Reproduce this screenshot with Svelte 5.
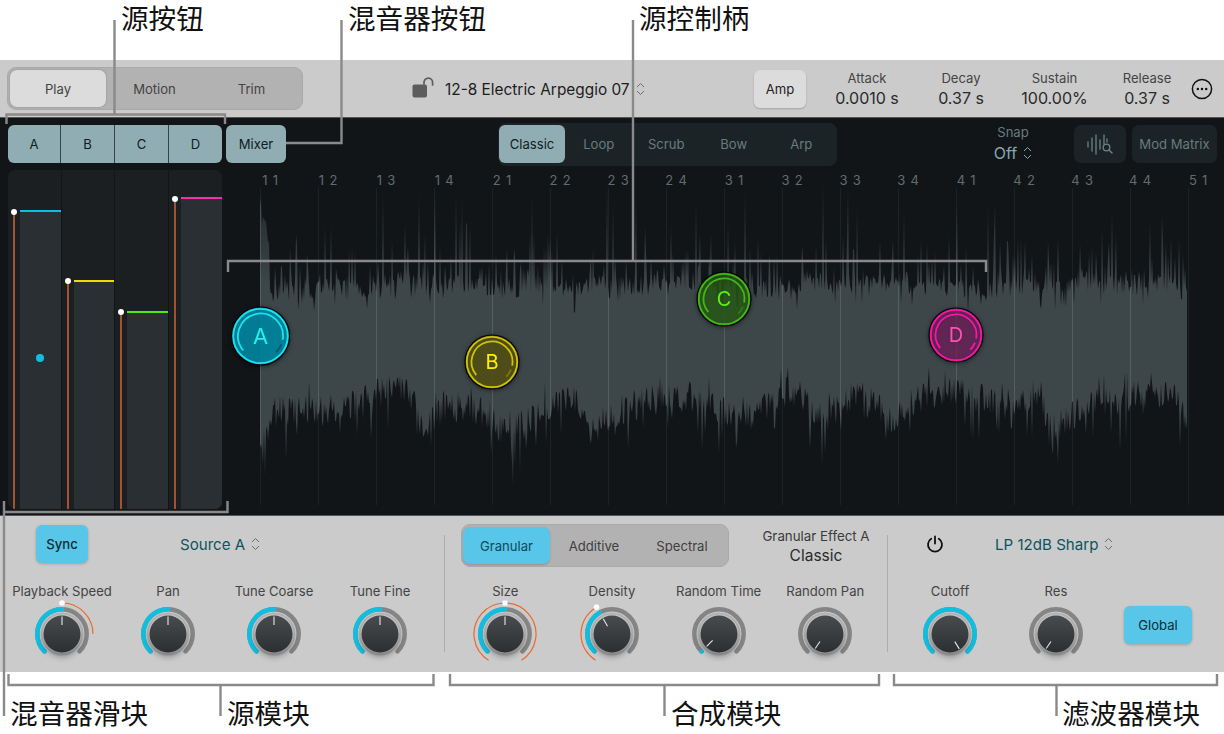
<script>
  const pt = (cx, cy, r, a) => {
    const t = (a * Math.PI) / 180;
    return [cx + r * Math.sin(t), cy - r * Math.cos(t)];
  };
  const arc = (cx, cy, r, a1, a2) => {
    const [x1, y1] = pt(cx, cy, r, a1);
    const [x2, y2] = pt(cx, cy, r, a2);
    return `M${x1.toFixed(2)} ${y1.toFixed(2)}A${r} ${r} 0 ${a2 - a1 > 180 ? 1 : 0} 1 ${x2.toFixed(2)} ${y2.toFixed(2)}`;
  };
  const C = 35;
  const sourceKnobs = [
    { id: 'k1', label: 'Playback Speed', value: 0, fill: [-135, 0], orange: [[0, 90]], dot: 0 },
    { id: 'k2', label: 'Pan', value: 0, fill: [-135, 0] },
    { id: 'k3', label: 'Tune Coarse', value: 0, fill: [-135, 0] },
    { id: 'k4', label: 'Tune Fine', value: 0, fill: [-135, 0] }
  ];
  const synthKnobs = [
    { id: 'k5', label: 'Size', value: 0, fill: [-135, 0], orange: [[-148, 148]], dot: 0, square: true },
    { id: 'k6', label: 'Density', value: -30, fill: [-135, -30], orange: [[-148, -30]], dot: -30 },
    { id: 'k7', label: 'Random Time', value: -135, tip: true },
    { id: 'k8', label: 'Random Pan', value: -146 }
  ];
  const filterKnobs = [
    { id: 'k9', label: 'Cutoff', value: 148, fill: [-135, 135] },
    { id: 'k10', label: 'Res', value: -146 }
  ];

  let seed = 20240611;
  const rnd = () => {
    seed = (seed * 1664525 + 1013904223) % 4294967296;
    return seed / 4294967296;
  };
  const lowerKeys = [[260,440],[275,412],[300,408],[340,412],[373,395],[407,385],[423,428],[445,405],[473,410],[490,415],[507,435],[540,412],[573,392],[590,435],[610,415],[640,402],[673,397],[707,397],[724,412],[757,412],[790,390],[824,420],[857,390],[890,420],[924,395],[957,392],[1007,405],[1040,392],[1050,436],[1065,420],[1090,405],[1157,392],[1175,400],[1187,425]];
  const lower = (x) => {
    for (let i = 1; i < lowerKeys.length; i++) {
      if (x <= lowerKeys[i][0]) {
        const [a, b] = lowerKeys[i - 1];
        const [c, d] = lowerKeys[i];
        return b + ((d - b) * (x - a)) / (c - a);
      }
    }
    return 425;
  };
  const upperPts = [];
  const lowerPts = [];
  for (let x = 260; x <= 1187; x += 1) {
    const r = rnd();
    const base = 281 + 4 * Math.sin(x / 37) + 3 * Math.sin(x / 11);
    let y;
    if (r < 0.56) y = base + rnd() * 15 + (rnd() > 0.86 ? 14 : 0);
    else if (r > 0.972) y = base - 45 - rnd() * 55;
    else y = base - Math.pow(rnd(), 2.6) * 56;
    if (x < 268) y = 190 + (x - 260) * 3 + rnd() * 30;
    upperPts.push(`${x},${y.toFixed(1)}`);
    const q = rnd();
    let l = lower(x) + (rnd() - 0.5) * 32;
    if (q > 0.93) l += 18 + rnd() * 24;
    else if (q < 0.06) l -= 14;
    if (x < 264) l = 440 + rnd() * 30;
    lowerPts.unshift(`${x},${l.toFixed(1)}`);
  }
  const wave = [...upperPts, ...lowerPts].join(' ');

  const bars = ['1 1','1 2','1 3','1 4','2 1','2 2','2 3','2 4','3 1','3 2','3 3','3 4','4 1','4 2','4 3','4 4','5 1'];
  const strips = [
    { fader: 297, h: 299, color: '#10bfe0' },
    { fader: 228, h: 229, color: '#e8e000' },
    { fader: 197, h: 198, color: '#55e810' },
    { fader: 310, h: 312, color: '#ff2ea8' }
  ];
  const handles = [
    { n: 'A', x: 260.5, y: 336, r: 29, fill: 'rgba(0,132,158,.93)', ring: '#19e3ee', text: '#22f0f5', dim: '#075a68', size: 22 },
    { n: 'B', x: 492, y: 362, r: 27, fill: 'rgba(88,84,22,.82)', ring: '#cfc400', text: '#fff000', dim: '#7d7700', size: 20 },
    { n: 'C', x: 724, y: 299, r: 27, fill: 'rgba(42,100,22,.72)', ring: '#42b814', text: '#5cf01c', dim: '#2f7d10', size: 20 },
    { n: 'D', x: 956, y: 335, r: 27, fill: 'rgba(140,28,110,.55)', ring: '#ff12a6', text: '#ff50b4', dim: '#ff12a6', size: 20 }
  ];
</script>

{#snippet chevrons()}
  <svg class="chev" viewBox="0 0 9 14" aria-hidden="true">
    <path d="M1 5 4.5 1.5 8 5M1 9l3.5 3.5L8 9" />
  </svg>
{/snippet}

{#snippet knob(k)}
  <div class="knob">
    <span class="klabel">{k.label}</span>
    <svg class="kdial" viewBox="0 0 70 70" aria-hidden="true">
      <defs>
        <linearGradient id={k.id} x1="0" y1="0" x2="0" y2="1">
          <stop offset="0" stop-color="#484c4f" />
          <stop offset="1" stop-color="#2b2f32" />
        </linearGradient>
      </defs>
      <path class="track" d={arc(C, C, 24.7, -135, 135)} />
      {#if k.fill}<path class="fillarc" d={arc(C, C, 24.7, k.fill[0], k.fill[1])} />{/if}
      {#if k.tip}<circle cx={pt(C, C, 24.7, -135)[0]} cy={pt(C, C, 24.7, -135)[1]} r="2.2" fill="#10bfe0" />{/if}
      <circle cx={C} cy={C} r="20.5" class="halo" />
      <circle cx={C} cy={C} r="18.5" class="cap" fill={`url(#${k.id})`} />
      <line
        class="pointer"
        x1={pt(C, C, 9, k.value)[0]}
        y1={pt(C, C, 9, k.value)[1]}
        x2={pt(C, C, 17.5, k.value)[0]}
        y2={pt(C, C, 17.5, k.value)[1]}
      />
      {#each k.orange ?? [] as o}
        <path class="mod" d={arc(C, C, 31, o[0], o[1])} />
      {/each}
      {#if k.dot !== undefined}
        {#if k.square}
          <rect x={pt(C, C, 31, k.dot)[0] - 2.5} y={pt(C, C, 31, k.dot)[1] - 2.5} width="5" height="5" rx="1" fill="#fff" />
        {:else}
          <circle cx={pt(C, C, 31, k.dot)[0]} cy={pt(C, C, 31, k.dot)[1]} r="2.8" fill="#fff" />
        {/if}
      {/if}
    </svg>
  </div>
{/snippet}

<div class="page">
  <div class="caprow top">
    <span class="cap-a">源按钮</span>
    <span class="cap-b">混音器按钮</span>
    <span class="cap-c">源控制柄</span>
  </div>

  <header class="head">
    <div class="seg mode">
      <button class="on">Play</button>
      <button>Motion</button>
      <button>Trim</button>
    </div>
    <div class="patch">
      <svg class="lock" viewBox="0 0 22 21" aria-hidden="true">
        <rect x="0.5" y="7.5" width="14.5" height="13" rx="2" fill="#5c5c5c" />
        <path d="M12 7V5.5a4.3 4.3 0 0 1 8.6 0V8" fill="none" stroke="#5c5c5c" stroke-width="1.7" stroke-linecap="round" />
      </svg>
      <span class="pname">12-8 Electric Arpeggio 07</span>
      {@render chevrons()}
    </div>
    <button class="amp">Amp</button>
    <div class="env">
      <div><span>Attack</span><b>0.0010 s</b></div>
      <div><span>Decay</span><b>0.37 s</b></div>
      <div><span>Sustain</span><b>100.00%</b></div>
      <div><span>Release</span><b>0.37 s</b></div>
    </div>
    <svg class="more" viewBox="0 0 22 22" aria-hidden="true">
      <circle cx="11" cy="11" r="9.6" fill="none" stroke="#111" stroke-width="1.5" />
      <circle cx="6.8" cy="11" r="1.25" fill="#111" />
      <circle cx="11" cy="11" r="1.25" fill="#111" />
      <circle cx="15.2" cy="11" r="1.25" fill="#111" />
    </svg>
  </header>

  <section class="editor">
    <div class="tools">
      <div class="sources">
        <button>A</button><button>B</button><button>C</button><button>D</button>
      </div>
      <button class="mixer">Mixer</button>
      <div class="modes">
        <button class="on">Classic</button>
        <button>Loop</button>
        <button>Scrub</button>
        <button>Bow</button>
        <button>Arp</button>
      </div>
      <div class="snap">
        <span>Snap</span>
        <div class="snapv"><b>Off</b>{@render chevrons()}</div>
      </div>
      <button class="dark icon" aria-label="Waveform zoom">
        <svg viewBox="0 0 26 22" aria-hidden="true">
          <path d="M1 9v5M5 5v13M9 2v19M13 7v9M17 2v9M20 6v3" fill="none" stroke="#6d8286" stroke-width="1.3" stroke-linecap="round" />
          <circle cx="19.5" cy="14.5" r="3.3" fill="none" stroke="#6d8286" stroke-width="1.3" />
          <path d="m22 17 3 3" stroke="#6d8286" stroke-width="1.4" stroke-linecap="round" />
        </svg>
      </button>
      <button class="dark matrix">Mod Matrix</button>
    </div>

    <div class="work">
      <div class="mixerpane">
        {#each strips as s}
          <div class="strip">
            <div class="fader" style={`height:${s.fader}px`}></div>
            <div class="level" style={`height:${s.h}px;border-top-color:${s.color}`}></div>
          </div>
        {/each}
        <span class="srcdot"></span>
      </div>
      <svg class="wavebox" viewBox="226 170 998 346" aria-hidden="true">
        <defs>
          <linearGradient id="wv" gradientUnits="userSpaceOnUse" x1="0" y1="190" x2="0" y2="480">
            <stop offset="0" stop-color="#22282b" />
            <stop offset="0.25" stop-color="#363e41" />
            <stop offset="0.33" stop-color="#3d4649" />
            <stop offset="0.83" stop-color="#3d4649" />
            <stop offset="1" stop-color="#262d30" />
          </linearGradient>
          <clipPath id="wc"><polygon points={wave} /></clipPath>
        </defs>
        <polygon points={wave} fill="url(#wv)" />
        {#each bars as b, i}
          <line class="grid" x1={260.5 + i * 58} y1="188" x2={260.5 + i * 58} y2="505" />
          <text class="barno" x={270.5 + i * 58} y="185">{b}</text>
        {/each}
        <g clip-path="url(#wc)">
          {#each bars as b, i}
            <line class="gridin" x1={260.5 + i * 58} y1="188" x2={260.5 + i * 58} y2="505" />
          {/each}
        </g>
        {#each handles as h}
          <g class="handle">
            <circle cx={h.x} cy={h.y} r={h.r} fill={h.fill} stroke="#050505" stroke-width="1.2" />
            <circle cx={h.x} cy={h.y} r={h.r - 1.8} fill="none" stroke={h.ring} stroke-width="1.8" />
            <path d={arc(h.x, h.y, h.r - 6.5, -130, 100)} fill="none" stroke={h.ring} stroke-width="1.8" />
            <path d={arc(h.x, h.y, h.r - 6.5, 112, 136)} fill="none" stroke={h.dim} stroke-width="1.8" />
            <text x={h.x} y={h.y + h.size * 0.36} fill={h.text} font-size={h.size} text-anchor="middle">{h.n}</text>
          </g>
        {/each}
      </svg>
    </div>
  </section>

  <section class="panel">
    <div class="module m1">
      <div class="mtop">
        <button class="blue sync">Sync</button>
        <div class="pick srcpick"><span>Source A</span>{@render chevrons()}</div>
      </div>
      <div class="knobs">
        {#each sourceKnobs as k}{@render knob(k)}{/each}
      </div>
    </div>
    <div class="rule"></div>
    <div class="module m2">
      <div class="mtop">
        <div class="seg synth">
          <button class="on">Granular</button>
          <button>Additive</button>
          <button>Spectral</button>
        </div>
        <div class="effect"><span>Granular Effect A</span><b>Classic</b></div>
      </div>
      <div class="knobs">
        {#each synthKnobs as k}{@render knob(k)}{/each}
      </div>
    </div>
    <div class="rule"></div>
    <div class="module m3">
      <div class="mtop">
        <svg class="power" viewBox="0 0 18 18" aria-hidden="true">
          <path d="M5.2 3.8a7 7 0 1 0 7.6 0M9 1.5v7" fill="none" stroke="#111" stroke-width="1.8" stroke-linecap="round" />
        </svg>
        <div class="pick"><span>LP 12dB Sharp</span>{@render chevrons()}</div>
      </div>
      <div class="knobs">
        {#each filterKnobs as k}{@render knob(k)}{/each}
        <button class="blue global">Global</button>
      </div>
    </div>
  </section>

  <div class="caprow bottom">
    <span class="cap-d">混音器滑块</span>
    <span class="cap-e">源模块</span>
    <span class="cap-f">合成模块</span>
    <span class="cap-g">滤波器模块</span>
  </div>

  <svg class="callouts" viewBox="0 0 1224 734" aria-hidden="true">
    <path d="M114.5 20V114.5M6.5 124V114.5H225V124" />
    <path d="M341.5 20V143H286" />
    <path d="M633 20V261M228 272V261H986V272" />
    <path d="M4 501V716M4 512H227.5V501" />
    <path d="M8.5 674V685H433.5V674M220.5 685V716" />
    <path d="M450 674V685H879V674M664.5 685V716" />
    <path d="M894 674V685H1217V674M1056.5 685V716" />
  </svg>
</div>

<style>
  :global(body) {
    margin: 0;
    background: #fff;
  }
  .page {
    position: relative;
    width: 1224px;
    height: 734px;
    overflow: hidden;
    font-family: Inter, "Liberation Sans", "Noto Sans CJK SC", sans-serif;
    font-size: 13.1px;
    color: #3b3b3b;
  }
  button {
    font: inherit;
    border: 0;
    padding: 0;
    background: none;
    color: inherit;
  }

  .caprow {
    position: relative;
    background: #fff;
    font-family: "Liberation Sans", "Noto Sans CJK SC", sans-serif;
    font-size: 27.6px;
    line-height: 36px;
    color: #111;
  }
  .caprow.top { height: 60px; }
  .caprow.bottom { height: 62px; }
  .caprow span { position: absolute; white-space: nowrap; }
  .top span { top: 2px; }
  .bottom span { top: 25px; }
  .cap-a { left: 121px; }
  .cap-b { left: 348px; }
  .cap-c { left: 639px; }
  .cap-d { left: 10px; }
  .cap-e { left: 227px; }
  .cap-f { left: 671px; }
  .cap-g { left: 1062px; }

  .callouts {
    position: absolute;
    inset: 0;
    width: 1224px;
    height: 734px;
    pointer-events: none;
  }
  .callouts path {
    fill: none;
    stroke: #8a8a8a;
    stroke-width: 2.4;
  }

  .head {
    height: 57px;
    background: #cbcbcb;
    border-bottom: 1px solid #555;
    display: flex;
    align-items: center;
    padding-left: 7px;
  }
  .seg {
    display: flex;
    box-sizing: border-box;
    background: #b2b2b2;
    border: 1px solid #a9a9a9;
    border-radius: 9px;
    padding: 2px;
    height: 43px;
  }
  .seg button { height: 100%; border-radius: 7px; padding-top: 1px; }
  .mode { width: 296px; }
  .mode button { width: 97px; color: #444; }
  .mode .on {
    width: 96px;
    background: #dcdcdc;
    box-shadow: 0 0 2px rgba(0, 0, 0, 0.25);
  }
  .patch {
    display: flex;
    align-items: center;
    margin-left: 109px;
    width: 342px;
  }
  .lock { width: 22px; height: 21px; margin-right: 11px; margin-top: -2px; }
  .pname { font-size: 15.4px; color: #1d1d1d; white-space: nowrap; padding-top: 1px; }
  .chev {
    width: 9px;
    height: 14px;
    margin-left: 6px;
    flex: none;
  }
  .chev path {
    fill: none;
    stroke: #6d6d6d;
    stroke-width: 1;
  }
  .amp {
    width: 52px;
    height: 38px;
    border-radius: 6px;
    background: #dcdcdc;
    color: #222;
    box-shadow: 0 1px 2px rgba(0, 0, 0, 0.2);
  }
  .env {
    display: grid;
    grid-template-columns: 94px 94px 93px 92px;
    margin-left: 14px;
    text-align: center;
  }
  .env span { display: block; line-height: 16px; color: #444; }
  .env b { display: block; font-weight: 400; font-size: 16px; line-height: 20px; margin-top: 2px; color: #2a2a2a; }
  .more { width: 22px; height: 22px; margin-left: -2px; }

  .editor {
    height: 397px;
    background: #121518;
    border-bottom: 1px solid #555;
  }
  .tools {
    height: 52px;
    display: flex;
    align-items: center;
    padding-left: 8px;
    box-sizing: border-box;
    padding-bottom: 7px;
    padding-top: 7px;
  }
  .tools > button,
  .sources {
    height: 38px;
  }
  .sources {
    width: 214px;
    display: grid;
    grid-template-columns: 53px 54px 54px 53px;
    border-radius: 6px;
    overflow: hidden;
    background: #8fadb3;
  }
  .sources button { color: #111c1f; border-right: 1px solid #34434a; }
  .sources button:last-child { border-right: 0; }
  .mixer {
    width: 60px;
    margin-left: 4px;
    border-radius: 6px;
    background: #8fadb3;
    color: #111c1f;
  }
  .modes {
    display: flex;
    align-items: center;
    width: 339px;
    height: 43px;
    margin-left: 212px;
    padding-left: 1px;
    box-sizing: border-box;
    background: #1c2326;
    border-radius: 8px;
  }
  .modes button {
    width: 67.5px;
    height: 38px;
    color: #677b7f;
    border-radius: 6px;
  }
  .modes .on { width: 66px; background: #8fadb3; color: #111c1f; }
  .snap {
    width: 80px;
    margin-left: 136px;
    margin-top: -2px;
    text-align: center;
    color: #677b7f;
    line-height: 16px;
  }
  .snap span { display: block; }
  .snapv { display: flex; justify-content: center; align-items: center; line-height: 20px; margin-top: 3px; }
  .snapv b { font-weight: 400; font-size: 16px; color: #84a8ae; }
  .snapv .chev path { stroke: #84a8ae; }
  .tools .dark {
    background: #1c2326;
    border-radius: 7px;
    color: #677b7f;
  }
  .icon {
    width: 52px;
    margin-left: 21px;
    display: flex;
    align-items: center;
    justify-content: center;
  }
  .icon svg { width: 26px; height: 22px; }
  .matrix { width: 85px; margin-left: 6px; }

  .work { display: flex; height: 345px; padding-left: 8px; }
  .mixerpane {
    position: relative;
    width: 214px;
    height: 339px;
    flex: none;
    display: grid;
    grid-template-columns: repeat(4, 1fr);
    background: #1c1f22;
    border-radius: 7px;
    overflow: hidden;
  }
  .strip {
    display: flex;
    align-items: flex-end;
    padding-left: 5px;
    border-right: 1px solid #121518;
  }
  .strip:last-of-type { border-right: 0; }
  .fader {
    position: relative;
    width: 2px;
    background: #a05530;
    flex: none;
  }
  .fader::before {
    content: "";
    position: absolute;
    left: -2px;
    top: -3px;
    width: 6px;
    height: 6px;
    border-radius: 50%;
    background: #fff;
  }
  .level {
    flex: 1;
    margin-left: 5px;
    box-sizing: border-box;
    background: #2a2f33;
    border-top: 2px solid;
  }
  .srcdot {
    position: absolute;
    left: 28px;
    top: 184px;
    width: 8px;
    height: 8px;
    border-radius: 50%;
    background: #10bfe0;
  }
  .wavebox {
    width: 998px;
    height: 346px;
    margin-left: 4px;
    flex: none;
    overflow: visible;
  }
  .grid {
    stroke: rgba(130, 155, 155, 0.1);
    stroke-width: 1;
  }
  .gridin {
    stroke: rgba(140, 165, 165, 0.2);
    stroke-width: 1;
  }
  .barno {
    font-size: 13px;
    letter-spacing: 0.8px;
    fill: #626b6e;
    text-anchor: middle;
  }
  .handle { filter: drop-shadow(0 1px 2px rgba(0, 0, 0, 0.5)); }

  .panel {
    height: 156px;
    background: #cbcbcb;
    display: flex;
  }
  .module { flex: none; box-sizing: border-box; }
  .m1 { width: 444px; padding-left: 9px; }
  .m2 { width: 442px; padding-left: 7px; }
  .m3 { width: 336px; padding-left: 9px; }
  .rule {
    width: 1px;
    height: 117px;
    margin-top: 19px;
    background: #adadad;
    flex: none;
  }
  .mtop {
    height: 67px;
    display: flex;
    align-items: flex-start;
    box-sizing: border-box;
    padding-top: 9px;
  }
  .blue {
    background: #58c6e8;
    color: #102c36;
    border-radius: 6px;
    height: 38px;
    box-shadow: 0 1px 3px rgba(0, 0, 0, 0.22);
  }
  .sync { width: 52px; margin-left: 27px; font-weight: 500; }
  .pick {
    display: flex;
    align-items: center;
    height: 38px;
    font-size: 15.1px;
    color: #0e5460;
  }
  .srcpick { margin-left: 92px; }
  .m2 .mtop { padding-top: 8px; }
  .synth { width: 268px; margin-left: 9px; padding-left: 1px; }
  .synth button { color: #3f3f3f; width: 88px; }
  .synth .on { width: 87px; background: #58c6e8; color: #0f4a5a; box-shadow: 0 1px 2px rgba(0, 0, 0, 0.2); }
  .effect { margin-left: 20px; width: 134px; text-align: center; margin-top: 4px; white-space: nowrap; }
  .effect span { display: block; line-height: 16px; font-size: 13.3px; }
  .effect b { display: block; font-weight: 400; font-size: 15.5px; line-height: 23px; color: #2a2a2a; }
  .power { width: 18px; height: 18px; margin-left: 29px; margin-top: 10px; }
  .m3 .pick { margin-left: 51px; }
  .knobs { display: flex; }
  .knob { width: 106px; text-align: center; flex: none; }
  .m2 .knob { width: 106.67px; }
  .klabel { display: block; height: 16px; line-height: 16px; white-space: nowrap; color: #444; }
  .kdial { display: block; width: 70px; height: 70px; margin: 0 auto; overflow: visible; }
  .track { fill: none; stroke: #858585; stroke-width: 4.5; stroke-linecap: round; }
  .fillarc { fill: none; stroke: #10bfe0; stroke-width: 4.5; stroke-linecap: round; }
  .halo { fill: none; stroke: #b4b4b4; stroke-width: 2; }
  .cap { filter: drop-shadow(0 4px 3px rgba(0, 0, 0, 0.35)); }
  .pointer { stroke: #e8e8e8; stroke-width: 1.1; }
  .mod { fill: none; stroke: #ea6a2c; stroke-width: 1.2; }
  .global { width: 68px; margin-left: 15px; margin-top: 23px; }
</style>
